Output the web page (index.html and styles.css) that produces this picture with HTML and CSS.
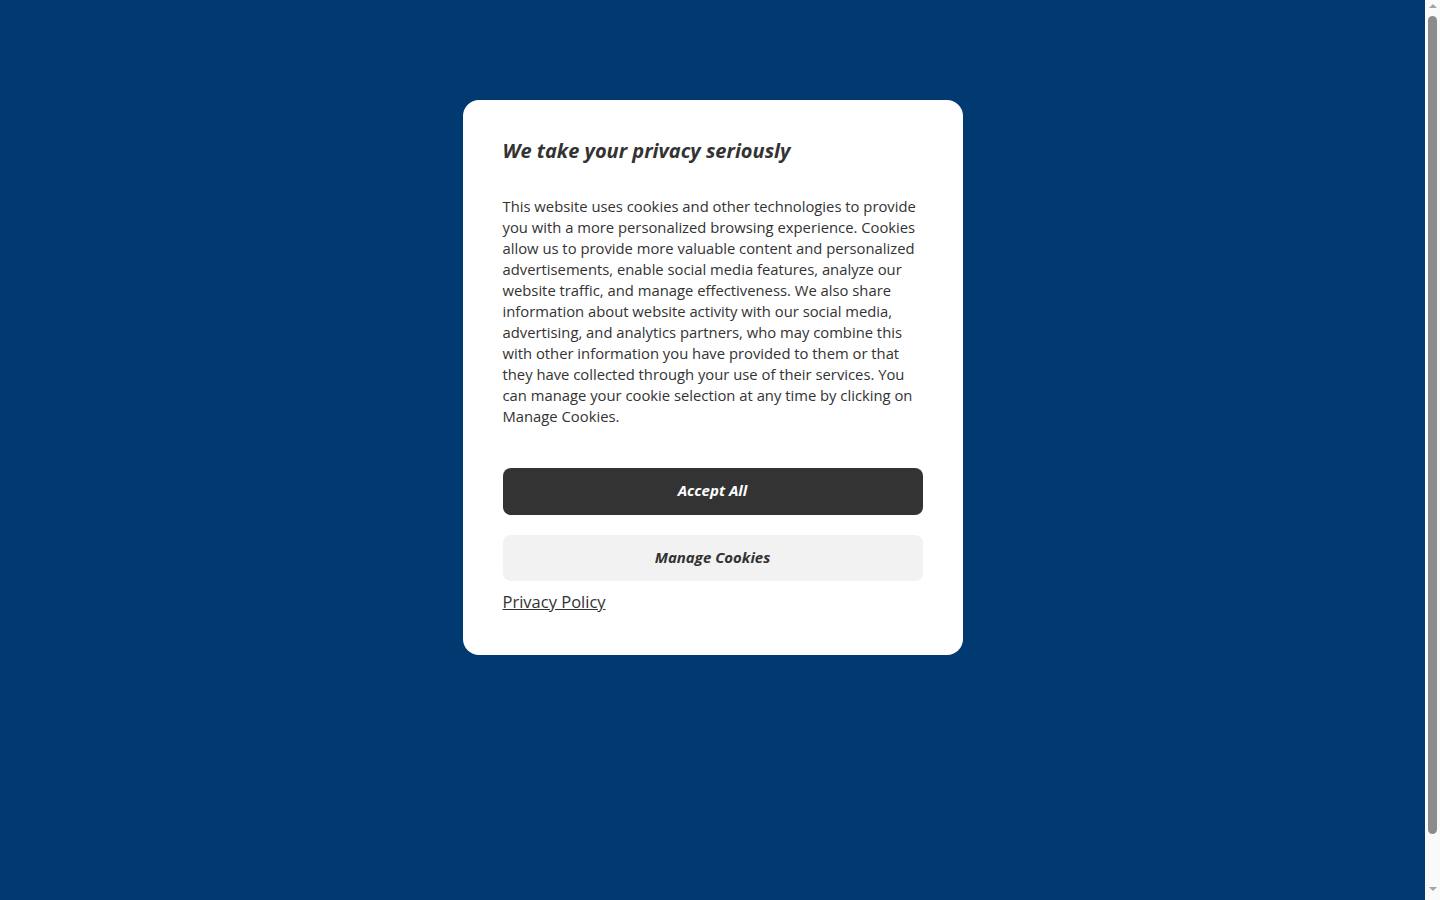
FILE: index.html
```html
<!DOCTYPE html>
<html lang="en">
<head>
<meta charset="utf-8">
<title>Privacy</title>
<link rel="stylesheet" href="styles.css">
</head>
<body>
<div class="page">
  <div class="modal" role="dialog" aria-labelledby="t">
    <h2 id="t" class="title">We take your privacy seriously</h2>
    <p class="text">This website uses cookies and other technologies to provide you with a more personalized browsing experience. Cookies allow us to provide more valuable content and personalized advertisements, enable social media features, analyze our website traffic, and manage effectiveness. We also share information about website activity with our social media, advertising, and analytics partners, who may combine this with other information you have provided to them or that they have collected through your use of their services. You can manage your cookie selection at any time by clicking on Manage Cookies.</p>
    <button class="btn btn-dark">Accept All</button>
    <button class="btn btn-light">Manage Cookies</button>
    <a class="link" href="#">Privacy Policy</a>
  </div>
</div>
<div class="scrollbar" aria-hidden="true">
  <span class="arrow arrow-up"></span>
  <span class="thumb"></span>
  <span class="arrow arrow-down"></span>
</div>
</body>
</html>
```
FILE: styles.css
```css
html, body {
  margin: 0;
  padding: 0;
  background: #003a70;
}
.page {
  min-height: 952px;
  padding: 100px 15px 0 0;
  box-sizing: border-box;
  display: flex;
  justify-content: center;
  align-items: flex-start;
}
.modal {
  width: 500px;
  box-sizing: border-box;
  background: #fff;
  border-radius: 16px;
  padding: 38px 40px 42px;
  font-family: "Open Sans", "Liberation Sans", sans-serif;
  color: #333;
  display: flex;
  flex-direction: column;
}
.title {
  margin: 0;
  font-size: 20px;
  line-height: 26px;
  font-weight: 700;
  font-style: italic;
  letter-spacing: 0;
  color: #333;
}
.text {
  margin: 32px 0 0;
  font-size: 14.8px;
  line-height: 21px;
  color: #333;
}
.btn {
  width: 100%;
  border: 0;
  border-radius: 8px;
  font-family: inherit;
  font-size: 15px;
  font-weight: 700;
  font-style: italic;
  cursor: pointer;
  padding: 0 0 4px;
}
.btn-dark {
  margin-top: 41px;
  height: 47px;
  background: #333;
  color: #fff;
}
.btn-light {
  margin-top: 20px;
  height: 46px;
  background: #f2f2f2;
  color: #333;
  padding-bottom: 3px;
}
.link {
  margin-top: 10px;
  align-self: flex-start;
  font-size: 16.5px;
  line-height: 22px;
  color: #333;
  text-decoration: underline;
}
.scrollbar {
  position: fixed;
  top: 0;
  right: 0;
  width: 15px;
  height: 100vh;
  background: #fafafa;
  display: flex;
  flex-direction: column;
  align-items: center;
  box-sizing: border-box;
  padding: 4px 0 9px;
}
.arrow {
  width: 0;
  height: 0;
  border-left: 4px solid transparent;
  border-right: 4px solid transparent;
}
.arrow-up {
  border-bottom: 4px solid #a3a3a3;
}
.arrow-down {
  margin-top: auto;
  border-top: 4px solid #a3a3a3;
}
.thumb {
  margin-top: 8px;
  width: 9px;
  height: 818px;
  border-radius: 5px;
  background: #8c8c8c;
}
```
